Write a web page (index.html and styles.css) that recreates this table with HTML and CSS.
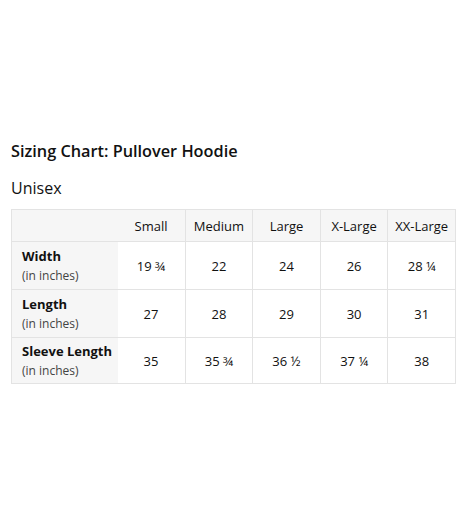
FILE: index.html
```html
<!DOCTYPE html>
<html>
<head>
<meta charset="utf-8">
<link rel="stylesheet" href="styles.css">
</head>
<body>
<div class="page">
  <h2 class="title">Sizing Chart: Pullover Hoodie</h2>
  <div class="subtitle">Unisex</div>
  <table class="chart">
    <colgroup>
      <col class="c-label"><col class="c-size"><col class="c-size"><col class="c-size"><col class="c-size"><col class="c-size">
    </colgroup>
    <thead>
      <tr>
        <th class="corner"></th>
        <th class="first">Small</th>
        <th>Medium</th>
        <th>Large</th>
        <th>X-Large</th>
        <th>XX-Large</th>
      </tr>
    </thead>
    <tbody>
      <tr>
        <td class="label"><b>Width</b><span>(in inches)</span></td>
        <td class="first">19 ¾</td><td>22</td><td>24</td><td>26</td><td>28 ¼</td>
      </tr>
      <tr>
        <td class="label"><b>Length</b><span>(in inches)</span></td>
        <td class="first">27</td><td>28</td><td>29</td><td>30</td><td>31</td>
      </tr>
      <tr class="last">
        <td class="label"><b>Sleeve Length</b><span>(in inches)</span></td>
        <td class="first">35</td><td>35 ¾</td><td>36 ½</td><td>37 ¼</td><td>38</td>
      </tr>
    </tbody>
  </table>
</div>
</body>
</html>
```

FILE: styles.css
```css
html, body {
  margin: 0;
  padding: 0;
  background: #fff;
}
body {
  font-family: "Open Sans", "Noto Sans", sans-serif;
  color: #111;
}
.page {
  padding: 139px 11px 0 11px;
}
.title {
  margin: 0;
  font-size: 16.3px;
  font-weight: 600;
  line-height: 24px;
}
.subtitle {
  margin-top: 14px;
  font-size: 16px;
  line-height: 22px;
}
.chart {
  margin-top: 10px;
  border-collapse: collapse;
  table-layout: fixed;
  width: 444px;
  font-size: 13px;
}
.c-label { width: 106px; }
.c-size { width: 67.6px; }
.chart th, .chart td {
  border: 1px solid #e3e3e3;
  text-align: center;
  padding: 0;
}
.chart th {
  background: #f6f6f6;
  font-weight: 400;
  height: 31px;
}
.chart td {
  height: 47px;
}
.chart .last td {
  height: 45px;
}
.chart .corner, .chart .label {
  border-right: none;
}
.chart .first {
  border-left: none;
}
.chart .label {
  background: #f6f6f6;
  text-align: left;
  padding-left: 10px;
  line-height: 19px;
}
.label b {
  display: block;
  font-weight: 700;
}
.label span {
  display: block;
  font-size: 12px;
  color: #444;
}
```
